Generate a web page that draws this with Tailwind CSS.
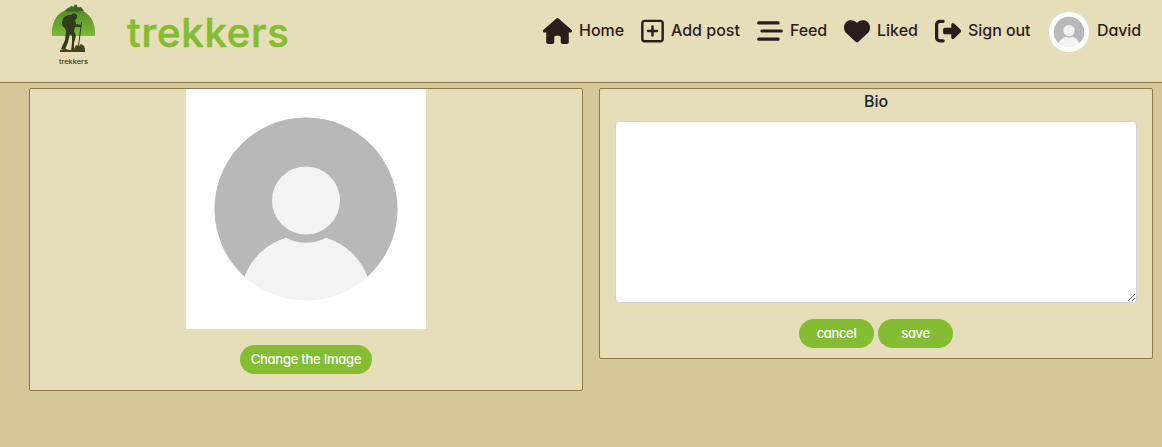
<!DOCTYPE html>
<html lang="en">
<head>
<meta charset="utf-8">
<title>trekkers</title>
<script src="https://cdn.jsdelivr.net/npm/@tailwindcss/browser@4"></script>
</head>
<body class="h-[447px] overflow-hidden bg-[#d4c799] font-['Inter','Open_Sans',sans-serif] font-medium text-[#2c1d1d] [font-feature-settings:'cv11']">
<header class="flex h-[83px] items-start border-b border-[#8b7a4a] bg-[#e6deb8] pl-[50px]">
  <svg class="mt-1 h-[64px] w-[47px] shrink-0" viewBox="0 0 47 64">
    <defs><linearGradient id="hill" x1="0" y1="0" x2="0" y2="1"><stop offset="0" stop-color="#4a8422"/><stop offset="1" stop-color="#7db83a"/></linearGradient></defs>
    <path d="M2 32C1 20 6 10 14 7l4-3 3-2 2 1 2-3 2 3 3 0 3 4c8 4 13 13 12 25z" fill="url(#hill)"/>
    <path d="M15 7l3-3 2 1 2-3 2 2 2-4 2 4 3-1 3 4-4 0-3 1-3-1-4 1z" fill="#3d6329"/>
    <path d="M21 11c1-2 5-2 6 0l0 3-2 2 1 4 5 1v2l-6 0-1 4 2 5-2 7 0 6 2 3h-5l1-10 0-6-2-2-2 8-3 8-4-1 4-9 1-9-1-3c-3-1-4-5-2-9 1-3 4-4 7-4z" fill="#343d19"/>
    <path d="M31.500 18L28 46" stroke="#343d19" fill="none"/>
    <path d="M10 46l6-1 3 1 6-1-1 3H10zM24 45l2-4 3 1 2-2 3 2 1 3 0 3H24z" fill="#434419"/>
    <text x="9" y="59.500" textLength="29" lengthAdjust="spacingAndGlyphs" font-size="6.800" font-weight="500" fill="#3a3026">trekkers</text>
  </svg>
  <a class="ml-[30px] mt-[9px] w-[164px] shrink-0 whitespace-nowrap text-[40px] font-medium leading-[48px] tracking-[0.8px] text-[#84bd32] [-webkit-text-stroke:0.6px_#84bd32] [stroke-linejoin:round]">trekkers</a>
  <nav class="ml-[252px] mt-[11px] flex h-10 items-center gap-[17px] whitespace-nowrap text-base">
    <a class="flex items-center gap-[7px]"><svg class="h-[26px] w-[29px]" viewBox="0 0 576 512" fill="currentColor"><path d="M575.8 255.5c0 18-15 32.1-32 32.1h-32l.7 160.2c0 2.7-.2 5.4-.5 8.1V472c0 22.1-17.9 40-40 40H392c-22.1 0-40-17.9-40-40V384c0-17.7-14.3-32-32-32H256c-17.7 0-32 14.3-32 32v88c0 22.1-17.9 40-40 40H104c-22.1 0-40-17.9-40-40V287.600H32c-18 0-32-14-32-32.100c0-9 3-17 10-24L266.400 8c7-7 15-8 22-8s15 2 21 7L564.800 231.500c8 7 12 15 11 24z"/></svg><span class="w-[45px] pb-[2px]">Home</span></a>
    <a class="flex items-center gap-[7px]"><svg class="h-[26px] w-[23px]" viewBox="0 0 448 512" fill="currentColor"><path d="M64 80c-8.8 0-16 7.2-16 16V416c0 8.8 7.2 16 16 16H384c8.8 0 16-7.2 16-16V96c0-8.800-7.200-16-16-16H64zM0 96C0 60.700 28.700 32 64 32H384c35.300 0 64 28.700 64 64V416c0 35.300-28.700 64-64 64H64c-35.300 0-64-28.700-64-64V96zM200 344V280H136c-13.300 0-24-10.700-24-24s10.700-24 24-24h64V168c0-13.300 10.700-24 24-24s24 10.700 24 24v64h64c13.300 0 24 10.700 24 24s-10.700 24-24 24H248v64c0 13.300-10.700 24-24 24s-24-10.700-24-24z"/></svg><span class="w-[69px] pb-[2px]">Add post</span></a>
    <a class="flex items-center gap-[7px]"><svg class="h-[26px] w-[26px]" viewBox="0 0 512 512" stroke="currentColor" stroke-width="60" stroke-linecap="round"><path d="M32 96H416M96 256H480M32 416H416"/></svg><span class="w-[37px] pb-[2px] tracking-[-0.1px]">Feed</span></a>
    <a class="flex items-center gap-[7px]"><svg class="h-[26px] w-[26px]" viewBox="0 0 512 512" fill="currentColor"><path d="M47.600 300.400L228.300 469.100c7.500 7 17.400 10.900 27.700 10.900s20.200-3.900 27.700-10.900L464.400 300.400c30.400-28.300 47.600-68 47.600-109.500v-5.800c0-69.900-50.500-129.500-119.400-141C347 36.500 300.600 51.400 268 84L256 96 244 84c-32.600-32.600-79-47.500-124.600-39.900C50.500 55.600 0 115.200 0 185.100v5.800c0 41.500 17.200 81.200 47.600 109.500z"/></svg><span class="w-[41px] pb-[2px]">Liked</span></a>
    <a class="flex items-center gap-[7px]"><svg class="h-[26px] w-[26px]" viewBox="0 0 512 512" fill="currentColor"><path d="M377.900 105.900L500.700 228.700c7.200 7.200 11.300 17.100 11.300 27.300s-4.100 20.100-11.300 27.300L377.900 406.100c-6.400 6.400-15 9.900-24 9.900c-18.700 0-33.900-15.200-33.900-33.900l0-62.100-128 0c-17.700 0-32-14.300-32-32l0-64c0-17.700 14.300-32 32-32l128 0 0-62.100c0-18.700 15.200-33.900 33.900-33.900c9 0 17.600 3.600 24 9.900zM160 96L96 96c-17.700 0-32 14.300-32 32l0 256c0 17.700 14.300 32 32 32l64 0c17.700 0 32 14.300 32 32s-14.300 32-32 32l-64 0c-53 0-96-43-96-96L0 128C0 75 43 32 96 32l64 0c17.700 0 32 14.300 32 32s-14.300 32-32 32z"/></svg><span class="w-[63px] pb-[2px] tracking-[-0.05px]">Sign out</span></a>
    <a class="ml-px flex items-center gap-2"><svg class="mt-[2px] h-10 w-10 rounded-full bg-white" viewBox="0 0 240 240"><use href="#person"/></svg><span class="w-[45px] pb-[2px] tracking-[-0.1px]">David</span></a>
  </nav>
</header>
<main class="flex items-start gap-4 pl-[29px] pt-[5px]">
  <section class="flex h-[303px] w-[554px] flex-col items-center rounded-[2px] border border-[#8b7a4a] bg-[#e6deb8]">
    <svg class="h-60 w-60 shrink-0 bg-white" viewBox="0 0 240 240">
      <g id="person"><circle cx="120" cy="120" r="91.500" fill="#f3f3f3"/><path d="M58.500 187.700A91.500 91.500 0 1 1 181.500 187.700A64.500 64.500 0 0 0 140 148.700A42.500 42.500 0 0 1 100 148.700A64.500 64.500 0 0 0 58.500 187.700Z" fill="#b8b8b8"/><circle cx="120" cy="111.500" r="34" fill="#f3f3f3"/></g>
    </svg>
    <button class="mt-4 h-[29px] w-[132px] whitespace-nowrap rounded-full bg-[#84bd32] text-[13px] font-medium tracking-[-0.25px] text-white">Change the Image</button>
  </section>
  <section class="flex h-[271px] w-[554px] flex-col items-center rounded-[2px] border border-[#8b7a4a] bg-[#e6deb8]">
    <label class="h-8 text-base leading-6 text-[#212529]">Bio</label>
    <textarea class="h-[182px] w-[522px] shrink-0 resize rounded border border-[#ced4da] bg-white"></textarea>
    <div class="mt-4 flex gap-1 text-[13px] tracking-[-0.35px] text-white">
      <button class="h-[29px] w-[75px] rounded-full bg-[#84bd32]">cancel</button>
      <button class="h-[29px] w-[75px] rounded-full bg-[#84bd32]">save</button>
    </div>
  </section>
</main>
</body>
</html>
